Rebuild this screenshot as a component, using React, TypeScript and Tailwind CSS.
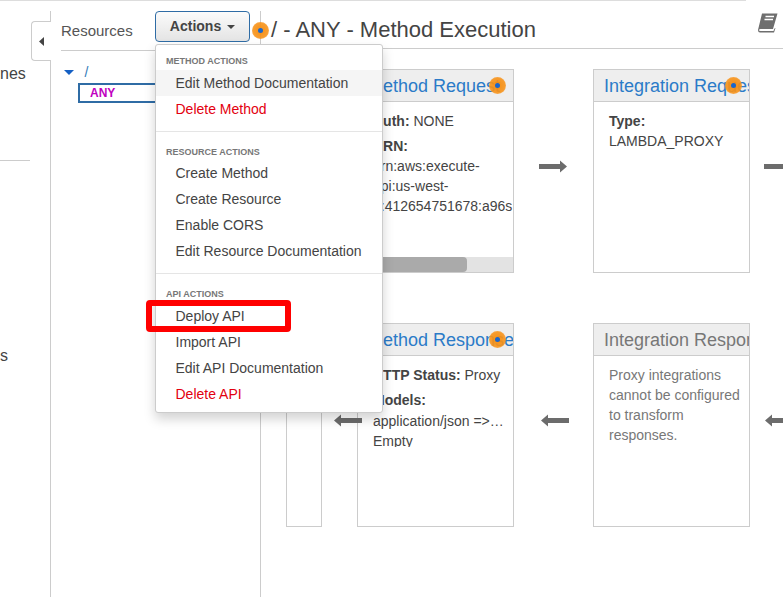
import type { ReactNode } from 'react'

const methodItems = [
  { label: 'Edit Method Documentation', hover: true },
  { label: 'Delete Method', danger: true },
]
const resourceItems = [
  { label: 'Create Method' },
  { label: 'Create Resource' },
  { label: 'Enable CORS' },
  { label: 'Edit Resource Documentation' },
]
const apiItems = [
  { label: 'Deploy API' },
  { label: 'Import API' },
  { label: 'Edit API Documentation' },
  { label: 'Delete API', danger: true },
]

type MenuItem = { label: string; hover?: boolean; danger?: boolean }

function MenuGroup({ title, items, headClass }: { title: string; items: MenuItem[]; headClass: string }) {
  return (
    <div>
      <div className={`px-[10px] pt-[6px] text-[9px] leading-[13px] font-bold uppercase text-[#777] ${headClass}`}>{title}</div>
      {items.map((item) => (
        <div
          key={item.label}
          className={`h-[26px] px-[19.5px] text-[14px] leading-[26px] whitespace-nowrap ${item.danger ? 'text-[#e3000f]' : 'text-[#444]'} ${item.hover ? 'bg-[#f5f5f5]' : ''}`}
        >
          {item.label}
        </div>
      ))}
    </div>
  )
}

function Hotspot({ className }: { className: string }) {
  return (
    <div className={`absolute z-30 w-[17px] h-[17px] rounded-full bg-[radial-gradient(circle,rgba(245,138,11,0.95)_0%,rgba(247,147,26,0.9)_60%,rgba(251,176,95,0.6)_100%)] flex items-center justify-center ${className}`}>
      <div className="w-[5px] h-[5px] rounded-full bg-[#1a66cc]" />
    </div>
  )
}

function Arrow({ left, className }: { left?: boolean; className: string }) {
  return (
    <svg width="28" height="13" viewBox="0 0 28 13" className={`relative z-10 flex-none ${className}`}>
      {left ? (
        <path d="M0 6.5 L7 0.5 V4 H28 V9 H7 V12.5 Z" fill="#6c6c6c" />
      ) : (
        <path d="M28 6.5 L21 0.5 V4 H0 V9 H21 V12.5 Z" fill="#6c6c6c" />
      )}
    </svg>
  )
}

function Card({ title, muted, children }: { title: string; muted?: boolean; children: ReactNode }) {
  return (
    <div className="flex-none w-[157px] h-[204px] border border-[#ccc] flex flex-col bg-white overflow-hidden">
      <div className={`flex-none h-[32px] bg-[#eee] border-b border-[#ccc] px-[10px] text-[18px] leading-[32px] whitespace-nowrap overflow-hidden ${muted ? 'text-[#777]' : 'text-[#2b7bc8]'}`}>
        {title}
      </div>
      {children}
    </div>
  )
}

export default function App() {
  return (
    <div className="relative w-[783px] h-[597px] overflow-hidden bg-white font-['Liberation_Sans',sans-serif] text-[14px] text-[#444]">
      <div className="h-[1px] w-[746px] bg-[#ddd]" />
      <div className="flex h-[596px] pt-[10px]">
        {/* left nav, cut off by the collapse */}
        <div className="flex-none w-[51px] border-r border-[#ccc] overflow-hidden">
          <div className="w-[20px] mt-[52px] text-[16px] leading-[22px] text-right">nes</div>
          <div className="w-[30px] mt-[75px] h-[1px] bg-[#ccc]" />
          <div className="w-[3px] mt-[184px] text-[16px] leading-[22px]">s</div>
        </div>

        {/* resources panel */}
        <div className="flex-none w-[210px] border-r border-[#ccc]">
          <div className="ml-[10px] h-[40px] border-b border-[#ccc] text-[15px] leading-[40px] text-[#555]">Resources</div>
          <div className="pl-[13px] pt-[11px]">
            <div className="flex items-center h-[20px]">
              <svg width="10" height="5" viewBox="0 0 10 5"><path d="M0 0 H10 L5 5 Z" fill="#1560c4" /></svg>
              <span className="ml-[10.5px] text-[#337ab7]">/</span>
            </div>
            <div className="ml-[14px] mt-[1px] h-[20px] w-[170px] border-2 border-[#2f6ca5] pl-[10px] text-[12px] leading-[16px] font-bold text-[#c000c0]">ANY</div>
          </div>
        </div>

        {/* method execution */}
        <div className="flex-1 min-w-0 overflow-hidden">
          <div className="h-[38px] border-b border-[#ccc] flex justify-between pl-[10px] pr-[5px]">
            <div className="text-[22px] leading-[38px] text-[#444] whitespace-nowrap">/ - ANY - Method Execution</div>
            <svg width="20" height="20" viewBox="0 0 20 20" className="mt-[2px]">
              <path d="M4 0.5 H19.5 L15 16 H2.5 Q1 16 1 17.2 Q1 18 2.5 18 H15.5 L16.5 15.5 L17.5 15 L16 19.5 H2 Q0 19.5 0 17 Z" fill="#6e6e6e" />
              <path d="M7.5 3.5 H16 M6.5 6.5 H15" stroke="#fff" strokeWidth="1.4" />
            </svg>
          </div>
          <div className="flex pl-[25px] pt-[20px]">
            <div className="flex-none w-[36px] h-[458px] border border-[#ccc]" />
            <div className="flex flex-col gap-[50px] ml-[35px]">
              <div className="flex items-start">
                <Card title="Method Request">
                  <div className="flex-1 min-h-0 overflow-hidden pl-[15px] pt-[9px] leading-[20px] whitespace-nowrap">
                    <div><b>Auth:</b> NONE</div>
                    <div className="mt-[5px] font-bold">ARN:</div>
                    <div>arn:aws:execute-</div>
                    <div>api:us-west-</div>
                    <div>2:412654751678:a96s</div>
                  </div>
                  <div className="flex-none h-[15px] bg-[#e3e3e3]">
                    <div className="h-full w-[109px] rounded-r-[4px] bg-[#aaa]" />
                  </div>
                </Card>
                <Arrow className="mt-[91px] ml-[25px] mr-[26px]" />
                <Card title="Integration Request">
                  <div className="pl-[15px] pt-[9px] leading-[20px]">
                    <div className="font-bold">Type:</div>
                    <div>LAMBDA_PROXY</div>
                  </div>
                </Card>
                <Arrow className="mt-[91px] ml-[14px]" />
              </div>
              <div className="flex items-start -ml-[23px]">
                <Arrow left className="mt-[91px] -mr-[5px]" />
                <Card title="Method Response">
                  <div className="pl-[15px] pr-[9px] pt-[9px] leading-[20px]">
                    <div className="whitespace-nowrap"><b>HTTP Status:</b> Proxy</div>
                    <div className="h-[57px] mt-[5px] overflow-hidden">
                      <div className="font-bold">Models:</div>
                      <div className="truncate mt-[1px]">application/json =&gt; Empty</div>
                      <div>Empty</div>
                    </div>
                  </div>
                </Card>
                <Arrow left className="mt-[91px] ml-[27px] mr-[24px]" />
                <Card title="Integration Response" muted>
                  <div className="pl-[15px] pt-[9px] leading-[20px] text-[#777]">
                    Proxy integrations<br />cannot be configured<br />to transform<br />responses.
                  </div>
                </Card>
                <Arrow left className="mt-[91px] ml-[15px]" />
              </div>
            </div>
          </div>
        </div>
      </div>

      {/* collapse tab */}
      <div className="absolute left-[31px] top-[21px] w-[20px] h-[40px] bg-white border border-r-0 border-[#ccc] rounded-l-[4px] flex items-center justify-center">
        <svg width="5" height="9" viewBox="0 0 5 9"><path d="M5 0 V9 L0 4.5 Z" fill="#444" /></svg>
      </div>

      {/* actions button and its open menu */}
      <button className="absolute z-20 left-[155px] top-[11px] w-[95px] h-[31px] rounded-[4px] border border-[#2f6ca5] bg-gradient-to-b from-[#fbfbfb] to-[#e4e4e4] flex items-center justify-center gap-[6px] text-[14px] font-bold text-[#444]">
        Actions
        <svg width="8" height="4" viewBox="0 0 8 4"><path d="M0 0 H8 L4 4 Z" fill="#444" /></svg>
      </button>
      <div className="absolute z-20 left-[155px] top-[44px] w-[228px] h-[369px] bg-white border border-[#ccc] rounded-[3px] shadow-[0_6px_12px_rgba(0,0,0,0.175)] pt-[4px]">
        <MenuGroup title="Method Actions" items={methodItems} headClass="h-[21px]" />
        <div className="h-[1px] bg-[#e5e5e5] mt-[9px] mb-[8px]" />
        <MenuGroup title="Resource Actions" items={resourceItems} headClass="h-[20px]" />
        <div className="h-[1px] bg-[#e5e5e5] mt-[9px] mb-[8px]" />
        <MenuGroup title="API Actions" items={apiItems} headClass="h-[21px]" />
      </div>

      {/* red highlight drawn over the menu */}
      <div className="absolute z-30 left-[146px] top-[300px] w-[145px] h-[32px] border-[6px] border-[#f00] rounded-[4px]" />

      <Hotspot className="left-[252px] top-[22px]" />
      <Hotspot className="left-[489px] top-[77px]" />
      <Hotspot className="left-[725px] top-[77px]" />
      <Hotspot className="left-[489px] top-[331px]" />
    </div>
  )
}
